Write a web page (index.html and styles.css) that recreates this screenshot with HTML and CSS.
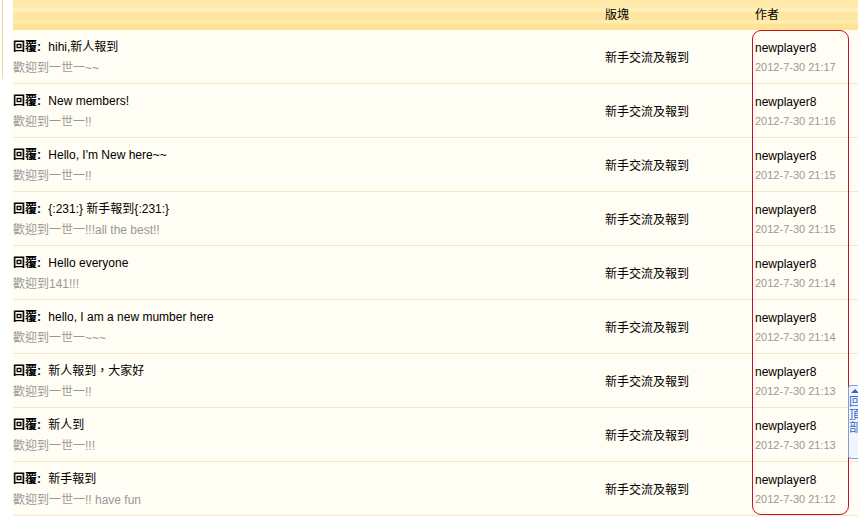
FILE: index.html
```html
<!DOCTYPE html>
<html lang="zh-Hant">
<head>
<meta charset="utf-8">
<title>回覆列表</title>
<link rel="stylesheet" href="styles.css">
</head>
<body>
<div class="side-line"></div>
<div class="list">
  <div class="row head">
    <div class="c-subject"></div>
    <div class="c-forum">版塊</div>
    <div class="c-author">作者</div>
  </div>
  <div class="row">
    <div class="c-subject"><div class="title"><b>回覆:</b> hihi,新人報到</div><div class="sub">歡迎到一世一~~</div></div>
    <div class="c-forum">新手交流及報到</div>
    <div class="c-author"><div class="name">newplayer8</div><div class="date">2012-7-30 21:17</div></div>
  </div>
  <div class="row">
    <div class="c-subject"><div class="title"><b>回覆:</b> New members!</div><div class="sub">歡迎到一世一!!</div></div>
    <div class="c-forum">新手交流及報到</div>
    <div class="c-author"><div class="name">newplayer8</div><div class="date">2012-7-30 21:16</div></div>
  </div>
  <div class="row">
    <div class="c-subject"><div class="title"><b>回覆:</b> Hello, I'm New here~~</div><div class="sub">歡迎到一世一!!</div></div>
    <div class="c-forum">新手交流及報到</div>
    <div class="c-author"><div class="name">newplayer8</div><div class="date">2012-7-30 21:15</div></div>
  </div>
  <div class="row">
    <div class="c-subject"><div class="title"><b>回覆:</b> {:231:} 新手報到{:231:}</div><div class="sub">歡迎到一世一!!!all the best!!</div></div>
    <div class="c-forum">新手交流及報到</div>
    <div class="c-author"><div class="name">newplayer8</div><div class="date">2012-7-30 21:15</div></div>
  </div>
  <div class="row">
    <div class="c-subject"><div class="title"><b>回覆:</b> Hello everyone</div><div class="sub">歡迎到141!!!</div></div>
    <div class="c-forum">新手交流及報到</div>
    <div class="c-author"><div class="name">newplayer8</div><div class="date">2012-7-30 21:14</div></div>
  </div>
  <div class="row">
    <div class="c-subject"><div class="title"><b>回覆:</b> hello, I am a new mumber here</div><div class="sub">歡迎到一世一~~~</div></div>
    <div class="c-forum">新手交流及報到</div>
    <div class="c-author"><div class="name">newplayer8</div><div class="date">2012-7-30 21:14</div></div>
  </div>
  <div class="row">
    <div class="c-subject"><div class="title"><b>回覆:</b> 新人報到，大家好</div><div class="sub">歡迎到一世一!!</div></div>
    <div class="c-forum">新手交流及報到</div>
    <div class="c-author"><div class="name">newplayer8</div><div class="date">2012-7-30 21:13</div></div>
  </div>
  <div class="row">
    <div class="c-subject"><div class="title"><b>回覆:</b> 新人到</div><div class="sub">歡迎到一世一!!!</div></div>
    <div class="c-forum">新手交流及報到</div>
    <div class="c-author"><div class="name">newplayer8</div><div class="date">2012-7-30 21:13</div></div>
  </div>
  <div class="row">
    <div class="c-subject"><div class="title"><b>回覆:</b> 新手報到</div><div class="sub">歡迎到一世一!! have fun</div></div>
    <div class="c-forum">新手交流及報到</div>
    <div class="c-author"><div class="name">newplayer8</div><div class="date">2012-7-30 21:12</div></div>
  </div>
</div>
<div class="highlight"></div>
<a class="totop" href="#">回頂部</a>
</body>
</html>
```
FILE: styles.css
```css
html, body {
  margin: 0;
  padding: 0;
  background: #ffffff;
  font-family: "Liberation Sans", "Noto Sans CJK TC", sans-serif;
  font-size: 12px;
  color: #000;
  overflow: hidden;
}
body {
  position: relative;
  width: 858px;
  height: 523px;
}
.side-line {
  position: absolute;
  left: 2px;
  top: 0;
  width: 1px;
  height: 79px;
  background: #eedb9c;
}
.list {
  margin-left: 13px;
}
.row {
  display: grid;
  grid-template-columns: 592px 150px 1fr;
  height: 53px;
  align-items: center;
  background: #fffdf4;
  border-bottom: 1px solid #f3e8c4;
}
.row.head {
  height: 30px;
  border-bottom: 0;
  background: linear-gradient(to bottom,
    #ffe9a8 0, #ffe9a8 7px,
    #fff0bf 8px, #fff0bf 11px,
    #ffe7a2 12px, #ffe7a2 20px,
    #ffedb5 21px, #ffedb5 23px,
    #ffe294 24px, #ffe294 30px);
}
.row.head .c-forum,
.row.head .c-author {
  padding-bottom: 4px;
}
.c-subject {
  padding-top: 1px;
}
.title {
  line-height: 16px;
  margin-bottom: 5px;
}
.title b {
  font-weight: bold;
  margin-right: 4px;
}
.sub {
  color: #999999;
  line-height: 16px;
}
.name {
  line-height: 16px;
  margin-bottom: 4px;
}
.date {
  color: #999999;
  font-size: 11px;
  line-height: 14px;
}
.highlight {
  position: absolute;
  left: 752px;
  top: 30px;
  width: 95px;
  height: 483px;
  border: 1px solid #c8102e;
  border-radius: 9px;
}
.totop {
  position: absolute;
  left: 848px;
  top: 385px;
  width: 12px;
  height: 74px;
  border: 1px solid #7aa0d8;
  border-radius: 3px;
  background: #f2f6fc;
  color: #3366cc;
  font-size: 12px;
  line-height: 13px;
  text-decoration: none;
  padding-top: 10px;
  box-sizing: border-box;
  overflow: hidden;
}
.totop::before {
  content: "";
  position: absolute;
  left: 2px;
  top: 3px;
  border-left: 4px solid transparent;
  border-right: 4px solid transparent;
  border-bottom: 4px solid #3366cc;
}
```
